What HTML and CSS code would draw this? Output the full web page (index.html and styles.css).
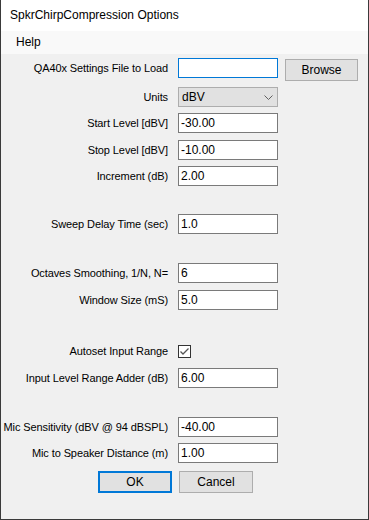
FILE: index.html
```html
<!DOCTYPE html>
<html>
<head>
<meta charset="utf-8">
<link rel="stylesheet" href="styles.css">
</head>
<body>
<div class="window">
  <div class="titlebar">SpkrChirpCompression Options</div>
  <div class="menubar"><span class="menu-item">Help</span></div>
  <div class="form">
    <div class="row row-first mt4">
      <label class="label">QA40x Settings File to Load</label>
      <div class="field"><div class="textbox focused"></div></div>
      <button class="btn browse">Browse</button>
    </div>
    <div class="row mt7">
      <label class="label">Units</label>
      <div class="field"><div class="combo"><span>dBV</span>
        <svg class="chev" width="9" height="5" viewBox="0 0 9 5"><path d="M0.5 0.5 L4.5 4.5 L8.5 0.5" fill="none" stroke="#606060" stroke-width="1"/></svg>
      </div></div>
    </div>
    <div class="row mt6">
      <label class="label">Start Level [dBV]</label>
      <div class="field"><div class="textbox">-30.00</div></div>
    </div>
    <div class="row mt7">
      <label class="label">Stop Level [dBV]</label>
      <div class="field"><div class="textbox">-10.00</div></div>
    </div>
    <div class="row mt6">
      <label class="label">Increment (dB)</label>
      <div class="field"><div class="textbox">2.00</div></div>
    </div>
    <div class="row mt28">
      <label class="label">Sweep Delay Time (sec)</label>
      <div class="field"><div class="textbox">1.0</div></div>
    </div>
    <div class="row mt29">
      <label class="label">Octaves Smoothing, 1/N, N=</label>
      <div class="field"><div class="textbox">6</div></div>
    </div>
    <div class="row mt7">
      <label class="label">Window Size (mS)</label>
      <div class="field"><div class="textbox">5.0</div></div>
    </div>
    <div class="row mt31">
      <label class="label">Autoset Input Range</label>
      <div class="field"><div class="checkbox">
        <svg width="11" height="11" viewBox="0 0 11 11"><path d="M1.5 5.5 L4 8 L9.5 2.5" fill="none" stroke="#555" stroke-width="1.3"/></svg>
      </div></div>
    </div>
    <div class="row mt7">
      <label class="label">Input Level Range Adder (dB)</label>
      <div class="field"><div class="textbox">6.00</div></div>
    </div>
    <div class="row mt29">
      <label class="label">Mic Sensitivity (dBV @ 94 dBSPL)</label>
      <div class="field"><div class="textbox">-40.00</div></div>
    </div>
    <div class="row mt6">
      <label class="label">Mic to Speaker Distance (m)</label>
      <div class="field"><div class="textbox">1.00</div></div>
    </div>
    <div class="buttons mt8">
      <button class="btn ok">OK</button>
      <button class="btn cancel">Cancel</button>
    </div>
  </div>
</div>
</body>
</html>
```

FILE: styles.css
```css
html, body {
  margin: 0;
  padding: 0;
  background: #f0f0f0;
}
body {
  font-family: "Liberation Sans", Arial, sans-serif;
  font-size: 11px;
  color: #000;
}
.window {
  width: 369px;
  height: 520px;
  box-sizing: border-box;
  border-left: 1px solid #3a3a3a;
  border-right: 1px solid #3a3a3a;
  border-bottom: 1px solid #3a3a3a;
  background: #f0f0f0;
  overflow: hidden;
}
.titlebar {
  height: 31px;
  background: #fff;
  padding-left: 9px;
  line-height: 31px;
  font-size: 12px;
}
.menubar {
  height: 23px;
  background: #f9f9f9;
  padding-left: 15px;
  line-height: 23px;
  font-size: 12px;
}
.form {
  display: flex;
  flex-direction: column;
}
.row {
  display: flex;
  align-items: center;
  height: 20px;
}
.row-first {
  height: 22px;
  align-items: flex-start;
}
.row-first .label { line-height: 20px; }
.label {
  width: 167px;
  text-align: right;
  white-space: nowrap;
  flex: none;
  letter-spacing: -0.1px;
}
.field {
  margin-left: 10px;
  width: 100px;
  flex: none;
  display: flex;
  align-items: center;
}
.textbox {
  width: 100px;
  height: 20px;
  box-sizing: border-box;
  border: 1px solid #7a7a7a;
  background: #fff;
  padding-left: 2px;
  line-height: 18px;
  font-size: 12px;
}
.textbox.focused {
  border-color: #0078d7;
}
.combo {
  width: 100px;
  height: 20px;
  box-sizing: border-box;
  border: 1px solid #adadad;
  background: #e1e1e1;
  padding-left: 3px;
  line-height: 18px;
  font-size: 12px;
  display: flex;
  justify-content: space-between;
  align-items: center;
}
.chev {
  margin-right: 4px;
}
.checkbox {
  width: 13px;
  height: 13px;
  box-sizing: border-box;
  border: 1px solid #333;
  background: #fff;
  display: flex;
  align-items: center;
  justify-content: center;
  margin-top: 1px;
}
.btn {
  font-family: inherit;
  font-size: 12px;
  color: #000;
  background: #e1e1e1;
  border: 1px solid #adadad;
  box-sizing: border-box;
  padding: 0;
  margin: 0;
}
.browse {
  margin-left: 7px;
  width: 73px;
  height: 22px;
  margin-top: 1px;
}
.buttons {
  display: flex;
  padding-left: 97px;
  gap: 7px;
}
.buttons .btn {
  width: 74px;
  height: 22px;
}
.ok {
  border: 2px solid #0078d7;
}
.mt4 { margin-top: 4px; }
.mt6 { margin-top: 6px; }
.mt7 { margin-top: 7px; }
.mt8 { margin-top: 8px; }
.mt28 { margin-top: 28px; }
.mt29 { margin-top: 29px; }
.mt31 { margin-top: 31px; }
```
